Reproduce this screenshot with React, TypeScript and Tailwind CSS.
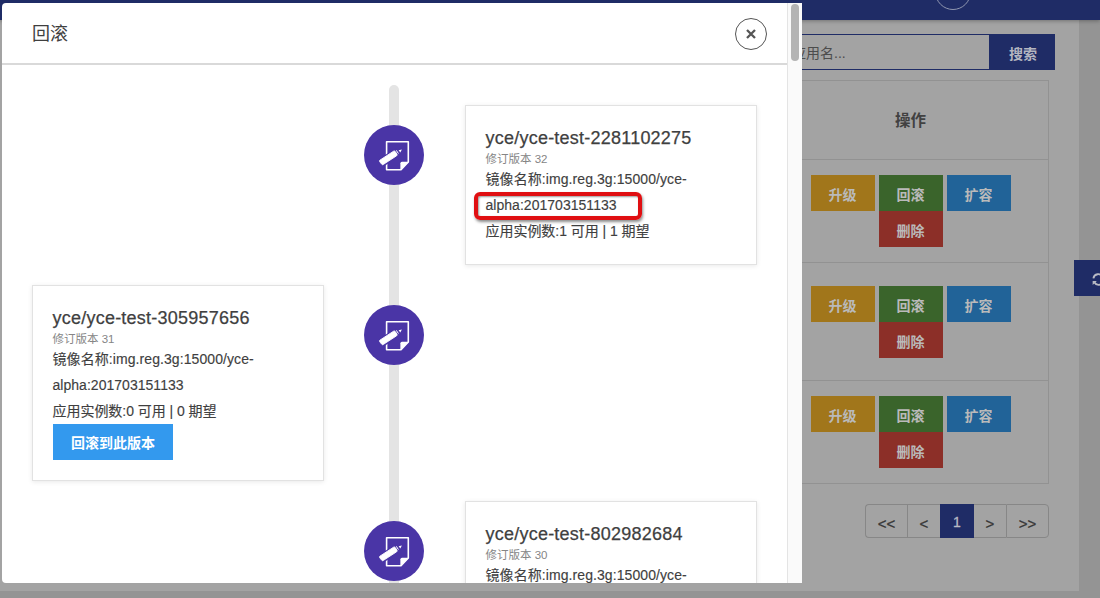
import React from "react";

type Revision = {
  name: string;
  revision: number;
  count: number;
  side: "left" | "right";
  canRollback?: boolean;
  highlight?: boolean;
};

const revisions: Revision[] = [
  { name: "yce/yce-test-2281102275", revision: 32, count: 1, side: "right", highlight: true },
  { name: "yce/yce-test-305957656", revision: 31, count: 0, side: "left", canRollback: true },
  { name: "yce/yce-test-802982684", revision: 30, count: 0, side: "right", canRollback: true },
];

function NoteIcon() {
  return (
    <svg width="32" height="32" viewBox="0 0 32 32" fill="none">
      <path d="M8.6 2.7H30.3V23L23 30.7H8.6Z" stroke="#fff" strokeWidth="1.6" strokeLinejoin="round" />
      <path d="M22.4 31V24.2Q22.4 22.7 24 22.7H31Z" fill="#fff" />
      <path d="M1 20L17 9.6L21.4 16.8L5 28Z" fill="#4a35a6" />
      <path d="M1.9 21.2L15.6 12.2Q16.6 11.6 17.3 12.6L19 15.3Q19.5 16.2 18.6 16.8L5.2 25.5Q4.2 26.1 3.6 25.1L1.6 22.5Q1.2 21.7 1.9 21.2Z" fill="#fff" stroke="#fff" strokeWidth="0.9" />
      <path d="M17.6 10L24.4 9L21 15.6Z" fill="#4a35a6" />
      <path d="M20.6 11.2L23.9 10.6L22.3 13.5Z" fill="#fff" />
      <path d="M18.3 11.3L20.4 14.6" stroke="#fff" strokeWidth="1" />
    </svg>
  );
}

function RevisionCard({ item }: { item: Revision }) {
  return (
    <div className="w-[292px] shrink-0 border border-[#e2e2e2] bg-white py-5 pr-5 pl-[19.5px] text-[#3f3f3f] shadow-[0_1px_5px_rgba(0,0,0,0.09)]">
      <h3 className="h-6 text-[18px] leading-[24px] tracking-[0.23px] whitespace-nowrap [-webkit-text-stroke:0.25px_#3f3f3f]">{item.name}</h3>
      <p className="h-4 text-[11.5px] leading-[18px] text-[#858585]">修订版本 {item.revision}</p>
      <p className="text-[14px] leading-[26px] tracking-[0.08px] whitespace-nowrap [-webkit-text-stroke:0.15px_#3f3f3f]">镜像名称:img.reg.3g:15000/yce-</p>
      <p className="relative text-[14px] leading-[26px] tracking-[0.03px] whitespace-nowrap [-webkit-text-stroke:0.15px_#3f3f3f]">
        alpha:201703151133
        {item.highlight && (
          <span className="absolute top-0 -left-[11.5px] h-7 w-[168px] rounded-[6px] border-4 border-[#e00f12] shadow-[1px_2px_3px_rgba(0,0,0,0.45),inset_1px_1px_2px_rgba(0,0,0,0.4)]" />
        )}
      </p>
      <p className="text-[14px] leading-[26px] tracking-[-0.04px] whitespace-nowrap [-webkit-text-stroke:0.15px_#3f3f3f]">应用实例数:{item.count} 可用 | {item.count} 期望</p>
      {item.canRollback && (
        <button className="ml-[0.5px] block h-9 w-[120px] bg-[#3399ee] text-[14px] leading-[38px] font-bold text-white">回滚到此版本</button>
      )}
    </div>
  );
}

function RollbackDialog() {
  return (
    <section className="absolute top-[3px] left-[2px] flex h-[580px] w-[800px] overflow-hidden rounded-l-[4px] bg-white">
      <div className="flex w-[785px] shrink-0 flex-col">
        <header className="flex h-[62px] shrink-0 items-center justify-between border-b-2 border-[#d9d9d9] pr-5 pl-[30px]">
          <h2 className="pt-0.5 text-[18px] text-[#3f3f3f]">回滚</h2>
          <button className="mt-0.5 flex size-8 items-center justify-center rounded-full border border-[#555]">
            <svg width="10" height="10" viewBox="0 0 10 10">
              <path d="M1 1L9 9M9 1L1 9" stroke="#555" strokeWidth="2.3" />
            </svg>
          </button>
        </header>
        <div className="relative flex flex-1 flex-col gap-5 overflow-hidden pt-10 pr-[30px] pl-[30px]">
          <span className="absolute top-5 left-[387px] h-[700px] w-[10px] rounded-full bg-[#e4e4e4]" />
          {revisions.map((item) => (
            <div key={item.revision} className="flex shrink-0 items-start gap-10">
              {item.side === "left" ? <RevisionCard item={item} /> : <span className="w-[292px] shrink-0" />}
              <span className="relative mt-5 flex size-[60px] shrink-0 items-center justify-center rounded-full bg-[#4a35a6]">
                <NoteIcon />
              </span>
              {item.side === "right" && (
                <div className="pl-px">
                  <RevisionCard item={item} />
                </div>
              )}
            </div>
          ))}
        </div>
      </div>
      <div className="flex w-[15px] justify-center border-l border-[#e4e4e4] bg-[#fafafa] pt-px">
        <span className="h-[57px] w-2 rounded-full bg-[#b4b4b4]" />
      </div>
    </section>
  );
}

const actionClass = "h-9 w-16 text-[14px] leading-[40px] font-bold text-[#bababa]";

function Actions() {
  return (
    <div className="grid grid-cols-[64px_64px_64px] content-start gap-x-1">
      <button className={`${actionClass} bg-[#a1761b]`}>升级</button>
      <button className={`${actionClass} bg-[#3a642b]`}>回滚</button>
      <button className={`${actionClass} bg-[#216398]`}>扩容</button>
      <button className={`${actionClass} col-start-2 bg-[#8c2f28]`}>删除</button>
    </div>
  );
}

export default function App() {
  return (
    <div className="relative flex h-[598px] w-[1100px] flex-col overflow-hidden bg-[#949494] font-['Liberation_Sans','Noto_Sans_CJK_SC',sans-serif]">
      <header className="relative z-0 flex h-5 shrink-0 items-end justify-end bg-[#1f2c66] pr-[129px] shadow-[0_1px_4px_rgba(0,0,0,0.3)]">
        <span className="mb-[10px] size-9 shrink-0 rounded-full border border-[#8f96b0]" />
      </header>
      <main className="flex h-[571px] w-[1079px] shrink-0 flex-col items-end bg-[#a3a3a3] pt-[14px]">
        <div className="mr-6 flex h-9 shrink-0">
          <div className="w-[290px] border border-[#1f2c66] pl-[49px] text-[14px] leading-[36px] text-[#4c4c4c]">请输入应用名...</div>
          <button className="w-[65px] bg-[#1f2c66] pl-px text-[14px] leading-[40px] font-bold text-[#b4b6c0]">搜索</button>
        </div>
        <div className="mt-[10px] mr-[30px] w-[277px] shrink-0 border border-[#929292]">
          <div className="h-[79px] border-b border-[#929292] text-center text-[15.5px] leading-[80px] font-bold text-[#414141]">操作</div>
          <div className="flex h-[103px] justify-center border-b border-[#929292] pt-[15px]"><Actions /></div>
          <div className="flex h-[118px] justify-center border-b border-[#929292] pt-[23px]"><Actions /></div>
          <div className="flex h-[102px] justify-center pt-[15px]"><Actions /></div>
        </div>
        <nav className="mt-5 mr-[30px] flex h-[34px] w-[184px] shrink-0 text-center text-[15px] leading-[37px] text-[#363636] [-webkit-text-stroke:0.3px_currentColor]">
          <span className="w-[42px] rounded-l border border-r-0 border-[#878787]">&lt;&lt;</span>
          <span className="w-[33px] border border-r-0 border-[#878787]">&lt;</span>
          <span className="w-[34px] bg-[#1f2c66] text-[14px] leading-[36px] text-[#b8bac4]">1</span>
          <span className="w-8 border border-x-0 border-[#878787]">&gt;</span>
          <span className="w-[43px] rounded-r border border-[#878787]">&gt;&gt;</span>
        </nav>
      </main>
      <button className="absolute top-[260px] left-[1074px] flex h-9 w-[60px] items-center bg-[#1f2c66] pt-0.5 pl-[18px]">
        <svg width="13" height="13" viewBox="0 0 14 14" fill="none" stroke="#b8bac4" strokeWidth="2">
          <path d="M1.5 5.8A5.4 5.4 0 0 1 11.5 4M12.5 8.2A5.4 5.4 0 0 1 2.5 10" />
          <path d="M13.3 1V5.5H8.8ZM.7 13V8.5H5.2Z" fill="#b8bac4" stroke="none" />
        </svg>
      </button>
      <RollbackDialog />
    </div>
  );
}
